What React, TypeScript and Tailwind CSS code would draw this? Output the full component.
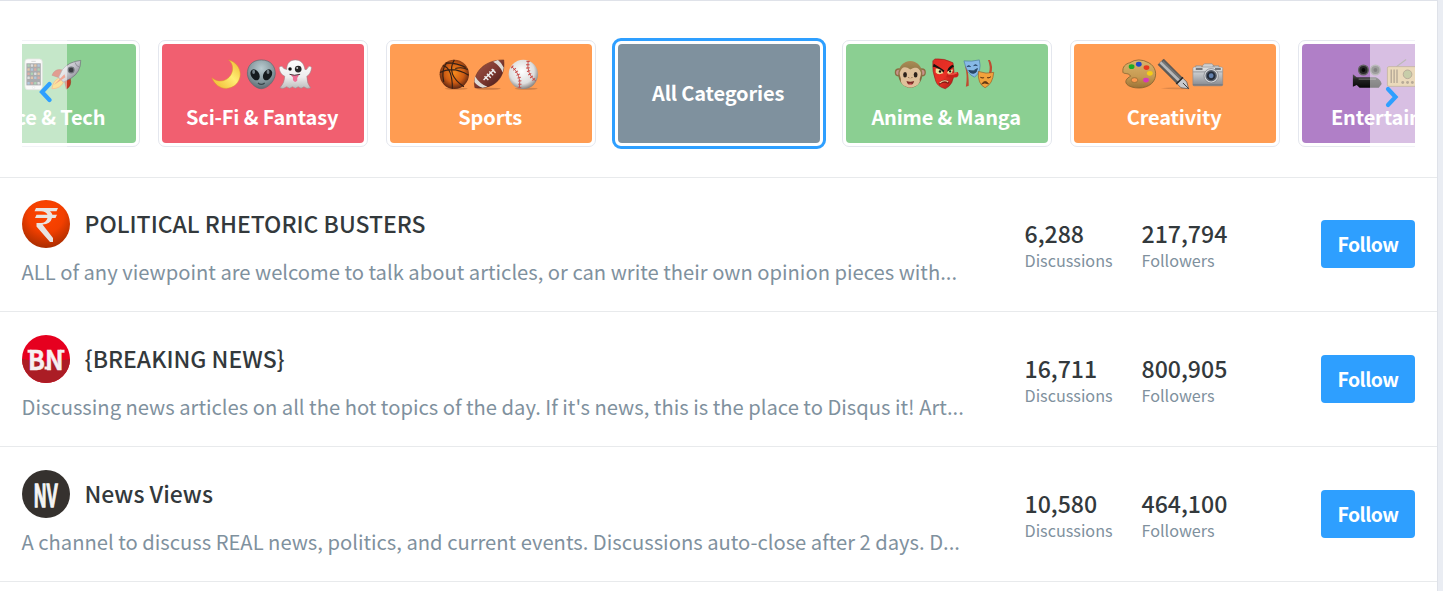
import React from 'react';

type IconProps = { className?: string };

const Defs = () => (
  <svg width="0" height="0" className="absolute" aria-hidden="true">
    <defs>
      <linearGradient id="moonG" x1="1" y1="0" x2="0" y2="1">
        <stop offset="0" stopColor="#eeb52c" /><stop offset=".45" stopColor="#ffee74" /><stop offset="1" stopColor="#efb52b" />
      </linearGradient>
      <radialGradient id="alienG" cx=".5" cy=".3" r=".7">
        <stop offset="0" stopColor="#b9cbd0" /><stop offset=".65" stopColor="#83959b" /><stop offset="1" stopColor="#5d6c73" />
      </radialGradient>
      <linearGradient id="ghostG" x1="0" y1="0" x2="0" y2="1">
        <stop offset="0" stopColor="#ffffff" /><stop offset=".6" stopColor="#ededed" /><stop offset="1" stopColor="#bcbcbc" />
      </linearGradient>
      <radialGradient id="basketG" cx=".5" cy=".45" r=".55">
        <stop offset="0" stopColor="#f58a1c" /><stop offset=".6" stopColor="#ce5c14" /><stop offset="1" stopColor="#5c2613" />
      </radialGradient>
      <linearGradient id="footG" x1="0" y1="0" x2="1" y2="1">
        <stop offset="0" stopColor="#9c5649" /><stop offset=".5" stopColor="#803a31" /><stop offset="1" stopColor="#3d1715" />
      </linearGradient>
      <radialGradient id="baseG" cx=".45" cy=".4" r=".6">
        <stop offset="0" stopColor="#ffffff" /><stop offset=".7" stopColor="#dedede" /><stop offset="1" stopColor="#8a8684" />
      </radialGradient>
      <linearGradient id="monkeyG" x1="0" y1="0" x2="0" y2="1">
        <stop offset="0" stopColor="#a98c55" /><stop offset="1" stopColor="#705633" />
      </linearGradient>
      <linearGradient id="goblinG" x1="0" y1="0" x2="1" y2="1">
        <stop offset="0" stopColor="#dd2b24" /><stop offset=".55" stopColor="#e93025" /><stop offset="1" stopColor="#a81a16" />
      </linearGradient>
      <linearGradient id="paletteG" x1="0" y1="0" x2="0" y2="1">
        <stop offset="0" stopColor="#d9b36c" /><stop offset=".6" stopColor="#c69a52" /><stop offset="1" stopColor="#9b7236" />
      </linearGradient>
      <linearGradient id="cameraG" x1="0" y1="0" x2="0" y2="1">
        <stop offset="0" stopColor="#e4e5e6" /><stop offset=".5" stopColor="#b6b9bd" /><stop offset="1" stopColor="#84878d" />
      </linearGradient>
      <linearGradient id="rocketG" x1="0" y1="0" x2="1" y2="1">
        <stop offset="0" stopColor="#f2f2f4" /><stop offset=".5" stopColor="#c1c1c9" /><stop offset="1" stopColor="#6f6f79" />
      </linearGradient>
      <linearGradient id="filmG" x1="0" y1="0" x2="0" y2="1">
        <stop offset="0" stopColor="#555" /><stop offset=".4" stopColor="#222" /><stop offset="1" stopColor="#070707" />
      </linearGradient>
      <radialGradient id="rupeeG" cx=".5" cy=".3" r=".75">
        <stop offset="0" stopColor="#ff4500" /><stop offset=".5" stopColor="#f23f00" /><stop offset="1" stopColor="#9e2a00" />
      </radialGradient>
    </defs>
  </svg>
);

const Glyph = ({ children }: { children?: React.ReactNode }) => (
  <svg width="34" height="34" viewBox="0 0 34 34" className="block shrink-0 overflow-visible">{children}</svg>
);

const Microscope = () => (
  <Glyph><path d="M14 4l6 2-3 13-6-2zM8 27h18v4H8zM20 12q8 6 2 15" fill="#777" stroke="#555" /></Glyph>
);
const Phone = () => (
  <Glyph>
    <rect x="8.300" y="1" width="18" height="32" rx="3" fill="#f4f4f2" stroke="#c8c8c6" strokeWidth=".8" />
    <rect x="9.800" y="5.500" width="15" height="23" fill="#55585c" />
    {[6.5, 10.8, 15.1, 19.4, 25].map((y, r) =>
      [10.8, 14.3, 17.8, 21.3].map((x, c) => (
        <rect key={`${y}-${x}`} x={x} y={y} width="2.500" height="2.600" rx=".5" fill={['#5fa76b', '#bcbcbc', '#c68d55', '#6490b8', '#b45a4d'][(r * 2 + c) % 5]} />
      )),
    )}
    <circle cx="17.300" cy="30.700" r="1.200" fill="#fff" stroke="#bbb" strokeWidth=".5" />
    <path d="M15 3.500h4.500" stroke="#999" strokeWidth=".8" />
  </Glyph>
);
const Rocket = () => (
  <Glyph>
    <path d="M8 21q-6 3-7 11q9 0 12-7z" fill="#f7c73a" stroke="#ed8a2b" />
    <path d="M12 12.500q-8-2-11 5.500l9 3zM20 21q2 8-4 11.500l-2-9z" fill="#c23a22" stroke="#8f2517" strokeWidth=".5" />
    <path d="M31 2.500Q18 4 12 12L8 20l5 5 8-4Q31 15 31 2.500z" fill="url(#rocketG)" stroke="#6f7077" strokeWidth=".7" />
    <path d="M14 17L3 28l12-8z" fill="#e24f2d" />
    <circle cx="21" cy="12.500" r="3" fill="#3a3d42" stroke="#71757b" strokeWidth="1.200" />
    <path d="M25 4.500q1 4 4.500 5" stroke="#777981" fill="none" strokeWidth=".7" />
  </Glyph>
);
const Moon = () => (
  <Glyph>
    <path d="M19.500 2C33 6 35 21 26 28.500 17 35 6 31 2 20.500 8 26 17 25 21.500 18 25 12 24 6 19.500 2z" fill="url(#moonG)" stroke="#d99b2a" strokeWidth=".5" />
  </Glyph>
);
const Alien = () => (
  <Glyph>
    <path d="M17 2C7 2 2 9 2.500 17c.5 7 8 15 14.500 15s14-8 14.500-15C32 9 27 2 17 2z" fill="url(#alienG)" stroke="#596a70" strokeWidth=".7" />
    <ellipse cx="10.500" cy="17.500" rx="4.300" ry="6.200" transform="rotate(-30 10.500 17.500)" fill="#151b1e" />
    <ellipse cx="23.500" cy="17.500" rx="4.300" ry="6.200" transform="rotate(30 23.500 17.500)" fill="#151b1e" />
    <ellipse cx="9" cy="14.500" rx="1.500" ry="2.200" fill="#738087" /><ellipse cx="24" cy="14.500" rx="1.500" ry="2.200" fill="#738087" />
    <path d="M13.500 26q3.500 3 7 0" fill="none" stroke="#38464b" strokeWidth="1.200" />
  </Glyph>
);
const Ghost = () => (
  <Glyph>
    <path d="M8 12C8 5 12 2 17 2s9 3 10 10q2 1 3-2 2-3 4 0-1 7-5 9 0 8 4 12-4 2-7-1-3 3-6 0-3 3-6 0-3 3-6 0-4 3-7 1 5-5 5-12-5-2-6-9 3-3 5 1z" fill="url(#ghostG)" stroke="#99898b" strokeWidth=".6" />
    <circle cx="11.500" cy="11.500" r="1.800" fill="#111" /><circle cx="20" cy="11.500" r="3.500" fill="#272727" /><circle cx="19" cy="10.500" r="1" fill="#ccc" />
    <path d="M12 17q5 2 9 0-1 3-2 3.500v3q-2.500 3-4.500-.5v-3q-1.500-1-2.500-3z" fill="#ee6f95" />
    <path d="M11 17q5 2 11 0" stroke="#443238" fill="none" />
  </Glyph>
);
const Basketball = () => (
  <Glyph>
    <ellipse cx="19" cy="32" rx="12" ry="1" fill="#ad6635" opacity=".5" />
    <circle cx="17" cy="17" r="15.300" fill="url(#basketG)" />
    <path d="M2 15q14-7 30 3M17 2Q8 17 27 30M5 8q10 2 10 24M8 5q13 0 21 5M18 11q7-2 13 1M6 25Q3 12 9 5" fill="none" stroke="#352016" strokeWidth="1.200" />
  </Glyph>
);
const Football = () => (
  <Glyph>
    <ellipse cx="16" cy="32" rx="13" ry="1" fill="#95542e" opacity=".45" />
    <path d="M2 31C-1 18 9 2 32 2c2 17-8 31-30 29z" fill="url(#footG)" stroke="#55231c" strokeWidth=".5" />
    <path d="M2 19q5 8 13 11l-5 1Q4 29 1.500 25zM21 4l5-2q4 3 6 8l-1 5q-3-7-10-11z" fill="#dedbd6" />
    <path d="M11 23L22 12M12 19l4 4M14.500 16.500l4 4M17 14l4 4M19.500 11.500l4 4" stroke="#eee" strokeWidth="1.500" />
  </Glyph>
);
const Baseball = () => (
  <Glyph>
    <ellipse cx="20" cy="32" rx="12" ry="1" fill="#a4663e" opacity=".5" />
    <circle cx="17" cy="17" r="15.300" fill="url(#baseG)" />
    <path d="M5 9q10 8 8 22M22 3q-2 14 8 21" fill="none" stroke="#b9413e" strokeWidth=".9" />
    <path d="M5 9q10 8 8 22M22 3q-2 14 8 21" fill="none" stroke="#cc4844" strokeWidth="3.600" strokeDasharray="1 2.400" />
  </Glyph>
);
const Monkey = () => (
  <Glyph>
    <circle cx="5" cy="15" r="3.500" fill="#c7928a" stroke="#8c6d42" strokeWidth="1.400" /><circle cx="29" cy="15" r="3.500" fill="#c7928a" stroke="#8c6d42" strokeWidth="1.400" />
    <ellipse cx="17" cy="17" rx="12.500" ry="14" fill="url(#monkeyG)" />
    <path d="M17 12Q9 6 6 15c-.6 4 2 6 1 9 2 9 18 9 20 0-1-3 1.500-5 1-9-3-9-11-3-11-3z" fill="#dfc09a" />
    <ellipse cx="11.500" cy="17.500" rx="2" ry="2.800" fill="#2d221b" /><ellipse cx="22.500" cy="17.500" rx="2" ry="2.800" fill="#2d221b" />
    <path d="M15 20l1 1M19 20l-1 1" stroke="#76502e" /><path d="M13 24q4 1.500 8 0-1 4-4 4t-4-4z" fill="#7a2a25" /><path d="M14.500 27q2.500-1 5 0-2.500 2-5 0" fill="#e16c6d" />
  </Glyph>
);
const Goblin = () => (
  <Glyph>
    <path d="M6 1q10-1 19 4l1 9q0 14-9 18-8-2-10-8Q3 14 4 3z" fill="url(#goblinG)" stroke="#8d211b" strokeWidth=".6" />
    <path d="M19 17q6-1 11-2.500 2 3.500-1 5.500-5 1-11 0z" fill="#c9211b" /><path d="M20 17q6 0 9-1.500" stroke="#ee5445" fill="none" strokeWidth="1.500" />
    <path d="M5 6q5 3 11 7l-1 2Q8 9 4 9zM25 7q-4 1-6 6l1 1.500q4-5 6-5z" fill="#171310" />
    <path d="M7 11q6 0 8 5-6 2-8-1zM19 15q2-3 6-3l-1 3q-2 2-5 1z" fill="#eadf9a" /><circle cx="11.500" cy="14" r="1.300" fill="#111" /><circle cx="22" cy="14" r="1.200" fill="#111" />
    <path d="M10 26q6-6 11-1l-1 2q-5-3-9 1z" fill="#821912" /><path d="M11 26q5-4 9-1" stroke="#eed1a0" fill="none" strokeWidth="1.200" />
  </Glyph>
);
const Masks = () => (
  <Glyph>
    <path d="M2 8q3 10 1 22l3-1Q6 17 4 9M26 2q3 7 1 14l2 1q3-8-1-15z" fill="#bf4c31" />
    <path d="M1 3q8 1 16-1 3 12-5 18-8-3-11-17z" fill="#87b9e7" stroke="#4c7ca8" strokeWidth=".7" />
    <path d="M4 9q2-2 4 0M11 8q2-2 4 0M6 13q5 2 9-2-1 5-4 5-4 0-5-3z" fill="#284667" stroke="#284667" />
    <path d="M16 14q8 3 16 1-1 12-9 16-8-4-7-17z" fill="#f3a23c" stroke="#9f5a20" strokeWidth=".7" />
    <path d="M18 20q2 1.500 4 .5M25 20.500q2 1 4-1M19.500 27q4-5 7 0-4-2-7 0z" fill="#633713" stroke="#633713" />
  </Glyph>
);
const Palette = () => (
  <Glyph>
    <path d="M8 5Q17-1 28 5c7 4 9 12 5 19-5 8-18 9-26 5-6-4-2-8 2-10-2-4-7-2-8-4C0 9 4 6 8 5z" fill="url(#paletteG)" stroke="#80602f" strokeWidth=".8" />
    <ellipse cx="13" cy="23" rx="3.500" ry="2.500" fill="#fe9c51" stroke="#8b6530" strokeWidth=".7" />
    <ellipse cx="10" cy="9" rx="3" ry="2.500" fill="#19ac28" /><ellipse cx="17.500" cy="6.500" rx="3" ry="2.500" fill="#2249c6" />
    <ellipse cx="25.500" cy="10" rx="3" ry="2.500" fill="#e83a1e" /><ellipse cx="29" cy="16" rx="3" ry="2.500" fill="#f4cc18" /><ellipse cx="25" cy="23" rx="3" ry="2.500" fill="#d838ba" />
  </Glyph>
);
const Pen = () => (
  <Glyph>
    <path d="M4 31.500q14-2 29 .5-15 1.500-29-.5" fill="#ba713f" opacity=".5" />
    <path d="M1 7L7 1l20 20-6 6z" fill="#5c5c5c" stroke="#4c4c4c" strokeWidth=".5" />
    <path d="M3.500 4.500L24 24.500" stroke="#b8b8b8" strokeWidth="3" /><path d="M6 3.500l19.500 19" stroke="#777" strokeWidth="1.500" />
    <path d="M21 27l6-6 4 4 2 7-8-1z" fill="#c9cacc" stroke="#4b4b4b" strokeWidth=".7" /><path d="M27 26l6 6" stroke="#333" /><path d="M20 27l7-7" stroke="#292929" strokeWidth="1.500" />
  </Glyph>
);
const Camera = () => (
  <Glyph>
    <path d="M5 8h6v3H5zM23 8h6v3h-6zM12 8l2-2h8l3 4-2 2H12z" fill="#cfd0d2" stroke="#888" strokeWidth=".6" />
    <rect x="2" y="9.500" width="31" height="19.500" rx="1.500" fill="url(#cameraG)" stroke="#85868a" strokeWidth=".6" />
    <path d="M2 14.500h31" stroke="#94979c" strokeWidth="1" /><path d="M5 11.500h7M25 11.500h6" stroke="#55585c" strokeWidth="1.400" /><path d="M2 28h31" stroke="#73767a" />
    <circle cx="21" cy="18.500" r="7.500" fill="#d8dadd" stroke="#777a80" strokeWidth=".7" /><circle cx="21" cy="18.500" r="5.200" fill="#232c3a" stroke="#5a606c" strokeWidth="1.500" /><circle cx="21" cy="18.500" r="2.500" fill="#6482ae" />
  </Glyph>
);
const FilmCamera = () => (
  <Glyph>
    <path d="M3 17l4 3h20q5 2 6 7l-3 4H10l-3-3-4 2z" fill="url(#filmG)" />
    <circle cx="14" cy="12.500" r="5" fill="#272727" stroke="#626262" strokeWidth="1.500" /><circle cx="26.500" cy="12.500" r="5" fill="#3b3b3b" stroke="#777" strokeWidth="1.500" />
    <circle cx="14" cy="12.500" r="2" fill="#050505" /><circle cx="26.500" cy="12.500" r="2" fill="#050505" /><path d="M9 22h18" stroke="#777" />
  </Glyph>
);
const Radio = () => (
  <Glyph>
    <path d="M12 9L22 1.500" stroke="#77736b" strokeWidth="1.200" />
    <rect x="2.500" y="9" width="31" height="20.500" rx="1.500" fill="#d6b577" stroke="#86693a" strokeWidth=".8" />
    <path d="M6.500 12v14M9.500 12v14M12.500 12v14" stroke="#715631" strokeWidth="1.500" />
    <circle cx="23.500" cy="17" r="4.500" fill="#8f9b52" stroke="#715631" strokeWidth="1" />
    <circle cx="18.500" cy="25.500" r="1.500" fill="#715631" /><circle cx="23.500" cy="25.500" r="1.500" fill="#715631" /><circle cx="28.500" cy="25.500" r="1.500" fill="#715631" />
  </Glyph>
);

const categories: { name: string; tone: string; icons: (() => React.JSX.Element)[] }[] = [
  { name: 'Science & Tech', tone: 'bg-[#8bcf92]', icons: [Microscope, Phone, Rocket] },
  { name: 'Sci-Fi & Fantasy', tone: 'bg-[#f15f70]', icons: [Moon, Alien, Ghost] },
  { name: 'Sports', tone: 'bg-[#ff9c52]', icons: [Basketball, Football, Baseball] },
  { name: 'All Categories', tone: 'bg-[#7f919e]', icons: [] },
  { name: 'Anime & Manga', tone: 'bg-[#8bcf92]', icons: [Monkey, Goblin, Masks] },
  { name: 'Creativity', tone: 'bg-[#ff9c52]', icons: [Palette, Pen, Camera] },
  { name: 'Entertainment', tone: 'bg-[#b07fc7]', icons: [FilmCamera, Radio, Microscope] },
];

const RupeeAvatar = () => (
  <svg width="48" height="48" viewBox="0 0 48 48" className="block shrink-0">
    <circle cx="24" cy="24" r="24" fill="url(#rupeeG)" />
    <path d="M14 8h22l-1.500 3.300H28q2 1.500 2.400 3.500H35l-1.500 3.200H30q-1.500 6-9.500 6.500L31 38v4h-3L14.500 26.500v-3.500H19q5 0 6.500-5H13l1.500-3.200h11Q24 11.300 19 11.300h-6.500z" fill="#e8e4e2" />
  </svg>
);
const NewsAvatar = () => (
  <svg width="48" height="48" viewBox="0 0 48 48" className="block shrink-0">
    <circle cx="24" cy="24" r="24" fill="#e6001f" />
    <path d="M0 24Q24 29 48 24A24 24 0 0 1 0 24z" fill="#ab1d25" />
    <text x="6" y="34.500" textLength="35.500" lengthAdjust="spacingAndGlyphs" fill="#f6eff0" stroke="#f6eff0" strokeWidth=".5" className="font-['Noto_Sans_CJK_JP',sans-serif] text-[27px] font-bold">BN</text>
    <path d="M5.500 14.700h4v3h-4zM22.500 31.500h4v3h-4zM38 14.700h4.500v3H38z" fill="#f6eff0" />
  </svg>
);
const ViewsAvatar = () => (
  <svg width="48" height="48" viewBox="0 0 48 48" className="block shrink-0">
    <circle cx="24" cy="24" r="24" fill="#35312e" />
    <g transform="translate(12 36.500) scale(0.500 1)" fill="#f4f4f4" stroke="#f4f4f4" strokeWidth="1.400" className="font-['Liberation_Sans',sans-serif] text-[34px] font-bold">
      <text x="0" y="0">N</text>
      <text x="25" y="0">V</text>
    </g>
  </svg>
);

const channels = [
  { title: 'POLITICAL RHETORIC BUSTERS', about: 'ALL of any viewpoint are welcome to talk about articles, or can write their own opinion pieces with...', discussions: '6,288', followers: '217,794', Avatar: RupeeAvatar, box: 'h-[134px] pt-[22px]' },
  { title: '{BREAKING NEWS}', about: "Discussing news articles on all the hot topics of the day. If it's news, this is the place to Disqus it! Art...", discussions: '16,711', followers: '800,905', Avatar: NewsAvatar, box: 'h-[135px] pt-[23px]' },
  { title: 'News Views', about: 'A channel to discuss REAL news, politics, and current events. Discussions auto-close after 2 days. D...', discussions: '10,580', followers: '464,100', Avatar: ViewsAvatar, box: 'h-[135px] pt-[23px]' },
];

const Arrow = ({ d, className }: IconProps & { d: string }) => (
  <svg width="14" height="22" viewBox="0 0 14 22" className={className}>
    <path d={d} fill="none" stroke="#2e9fff" strokeWidth="4.200" strokeLinecap="round" />
  </svg>
);

const Stat = ({ value, label, width }: { value: string; label: string; width: string }) => (
  <div className={`${width} shrink-0`}>
    <div className="-mt-px h-[29px] text-[23.100px] leading-7 font-medium text-[#33393c]">{value}</div>
    <div className="text-[16.200px] leading-6 text-[#7f919e]">{label}</div>
  </div>
);

export default function App() {
  return (
    <div className="flex h-[591px] w-[1443px] overflow-hidden bg-[#eaedf3] font-['Noto_Sans_CJK_JP',sans-serif]">
      <Defs />
      <main className="w-[1438px] shrink-0 border-t border-r border-[#dfe2e9] bg-white">
        <nav className="relative mx-[22px] h-[176px] w-[1393px] overflow-hidden">
          <div className="-ml-[92.400px] flex w-max gap-[18px] pt-[39px]">
            {categories.map(({ name, tone, icons }) => (
              <div
                key={name}
                className={
                  icons.length
                    ? 'h-[107px] w-[210px] shrink-0 rounded-[7px] border border-[#e4e7ee] p-[3px]'
                    : 'h-[107px] w-[210px] shrink-0 rounded-[7px] p-1 outline-3 -outline-offset-1 outline-[#2e9fff]'
                }
              >
                <div className={`flex h-full flex-col items-center rounded-[4px] ${tone} ${icons.length ? 'pt-[14px]' : 'justify-center pb-[2px]'}`}>
                  {icons.length > 0 && (
                    <div className="mr-[4px] flex h-[33px] gap-[2.500px]">
                      {icons.map((Icon, i) => (
                        <div key={i} className="h-[32px] w-[32px] origin-top-left scale-[0.96]"><Icon /></div>
                      ))}
                    </div>
                  )}
                  <div className={`-ml-px text-[20px] leading-[28px] font-bold tracking-[-0.160px] whitespace-nowrap text-white ${icons.length ? 'mt-[12px]' : ''}`}>{name}</div>
                </div>
              </div>
            ))}
          </div>
          <div className="absolute top-[39px] left-0 h-[108px] w-[45px] bg-white/50"><Arrow d="M11.500 3L4 11L11.500 19" className="absolute top-[41px] left-[16px]" /></div>
          <div className="absolute top-[39px] right-0 h-[108px] w-[45px] bg-white/50"><Arrow d="M3 3L10.500 11L3 19" className="absolute top-[46px] left-[15px]" /></div>
        </nav>
        {channels.map(({ title, about, discussions, followers, Avatar, box }) => (
          <section key={title} className={`flex border-t border-[#e8eaec] pl-[22px] ${box}`}>
            <div className="w-[1002.500px] shrink-0">
              <div className="flex h-12 items-center">
                <Avatar />
                <h2 className="-mt-[2px] ml-[14.500px] text-[22.980px] leading-8 font-medium whitespace-nowrap text-[#33393c]">{title}</h2>
              </div>
              <p className="mt-2 -ml-[0.500px] text-[20.180px] leading-8 whitespace-nowrap text-[#7f919e]">{about}</p>
            </div>
            <div className="flex pt-5">
              <Stat value={discussions} label="Discussions" width="w-[117px]" />
              <Stat value={followers} label="Followers" width="w-[179.500px]" />
              <button className="h-12 w-[94px] rounded-[4px] bg-[#2e9fff] text-[19.400px] leading-none font-bold tracking-[-0.500px] text-white">Follow</button>
            </div>
          </section>
        ))}
        <div className="border-t border-[#e8eaec]" />
      </main>
    </div>
  );
}
